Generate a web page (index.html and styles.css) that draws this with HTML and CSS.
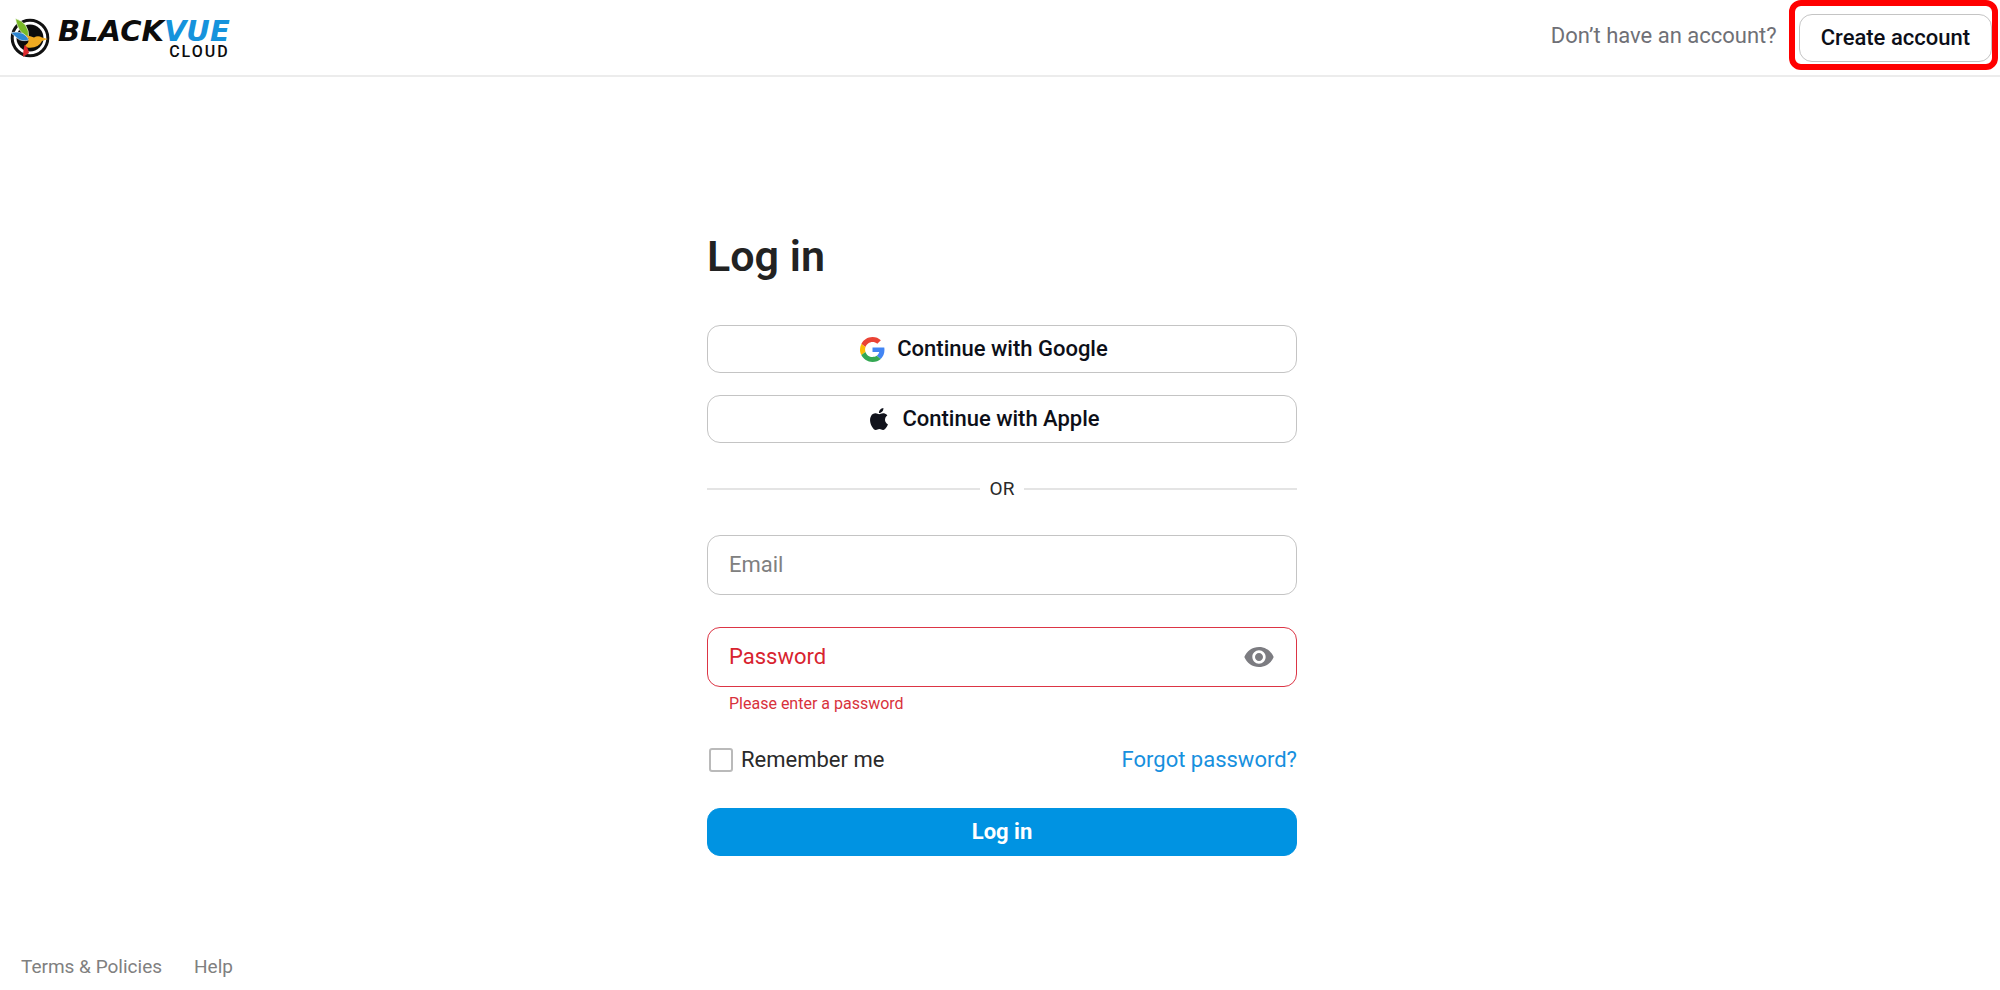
FILE: index.html
```html
<!DOCTYPE html>
<html lang="en">
<head>
<meta charset="utf-8">
<meta name="viewport" content="width=device-width, initial-scale=1">
<title>BlackVue Cloud - Log in</title>
<link rel="stylesheet" href="styles.css">
</head>
<body>
<header class="header">
  <a class="logo" href="#" aria-label="BlackVue Cloud">
    <svg class="logo-mark" viewBox="0 0 40 40" aria-hidden="true">
      <circle cx="20" cy="20" r="17.8" fill="#fff" stroke="#111" stroke-width="3"/>
      <circle cx="20" cy="20" r="13.5" fill="#0c0c0c"/>
      <path d="M5.500 .5Q12 2.500 15.500 7Q19.500 13 18.500 20Q10 14.500 8 9Q6 5 5.500 .5z" fill="#79b928" stroke="#fff" stroke-width=".6"/>
      <path d="M1 14.500Q8 13 13 15.500Q17 17.500 19 22Q11 24 7 20Q3 17 1 14.500z" fill="#2d86d2" stroke="#fff" stroke-width=".6"/>
      <path d="M18.500 20.500L15.500 17Q21 18 24 19.500Q28 17 32 19.500L38 21L32 23Q28 31 17 29.500Q14.500 28 15.500 27Q19 25 18.500 20.500z" fill="#f0aa21"/>
      <path d="M14.500 27Q18 29 19 35L13 39Q13 33 14.500 27z" fill="#dc292d"/>
    </svg>
    <span class="logo-text">
      <span class="logo-name">BLACK<span class="logo-accent">VUE</span></span>
      <span class="logo-sub">CLOUD</span>
    </span>
  </a>
  <div class="signup">
    <span class="signup-text">Don’t have an account?</span>
    <div class="highlight">
      <button class="btn btn-create" type="button">Create account</button>
    </div>
  </div>
</header>
<main class="main">
  <form class="login" novalidate>
    <h1 class="title">Log in</h1>
    <div class="providers">
      <button class="btn btn-provider" type="button">
        <svg class="icon-google" viewBox="0 0 48 48" aria-hidden="true">
          <path fill="#EA4335" d="M24 9.500c3.540 0 6.710 1.220 9.210 3.600l6.850-6.850C35.900 2.380 30.470 0 24 0 14.620 0 6.510 5.380 2.560 13.220l7.980 6.190C12.430 13.720 17.740 9.500 24 9.500z"/>
          <path fill="#4285F4" d="M46.980 24.550c0-1.570-.15-3.090-.38-4.550H24v9.020h12.940c-.58 2.960-2.260 5.480-4.780 7.180l7.730 6c4.510-4.180 7.090-10.360 7.090-17.650z"/>
          <path fill="#FBBC05" d="M10.530 28.590c-.48-1.450-.76-2.990-.76-4.590s.27-3.140.76-4.590l-7.980-6.190C.92 16.460 0 20.120 0 24s.92 7.540 2.560 10.780l7.970-6.190z"/>
          <path fill="#34A853" d="M24 48c6.480 0 11.930-2.130 15.890-5.810l-7.730-6c-2.150 1.450-4.920 2.300-8.160 2.300-6.260 0-11.570-4.220-13.470-9.910l-7.980 6.190C6.510 42.620 14.620 48 24 48z"/>
        </svg>
        Continue with Google
      </button>
      <button class="btn btn-provider" type="button">
        <svg class="icon-apple" viewBox="0 0 24 24" aria-hidden="true">
          <path fill="#11131c" d="M12.152 6.896c-.948 0-2.415-1.078-3.960-1.040-2.040.027-3.910 1.183-4.961 3.014-2.117 3.675-.546 9.103 1.519 12.090 1.013 1.454 2.208 3.090 3.792 3.039 1.520-.065 2.090-.987 3.935-.987 1.831 0 2.350.987 3.960.948 1.637-.026 2.676-1.480 3.676-2.948 1.156-1.688 1.636-3.325 1.662-3.415-.039-.013-3.182-1.221-3.220-4.857-.026-3.040 2.480-4.494 2.597-4.559-1.429-2.090-3.623-2.324-4.390-2.376-2-.156-3.675 1.090-4.610 1.090zM15.530 3.830c.843-1.012 1.400-2.427 1.245-3.830-1.207.052-2.662.805-3.532 1.818-.78.896-1.454 2.338-1.273 3.714 1.338.104 2.715-.688 3.559-1.701"/>
        </svg>
        Continue with Apple
      </button>
    </div>
    <div class="divider">OR</div>
    <div class="field">
      <input class="input" type="email" placeholder="Email" aria-label="Email">
    </div>
    <div class="field field-error">
      <input class="input" type="password" placeholder="Password" aria-label="Password" aria-invalid="true" aria-describedby="password-error">
      <button class="toggle" type="button" aria-label="Show password">
        <svg class="icon-eye" viewBox="0 0 24 24" aria-hidden="true">
          <path fill="#7c7c81" d="M12 4.500C7 4.500 2.730 7.610 1 12c1.730 4.390 6 7.500 11 7.500s9.270-3.110 11-7.500c-1.730-4.390-6-7.500-11-7.500zM12 17c-2.760 0-5-2.240-5-5s2.240-5 5-5 5 2.240 5 5-2.240 5-5 5zm0-8c-1.660 0-3 1.340-3 3s1.340 3 3 3 3-1.340 3-3-1.340-3-3-3z"/>
        </svg>
      </button>
    </div>
    <p class="error" id="password-error">Please enter a password</p>
    <div class="options">
      <label class="remember"><input class="checkbox" type="checkbox">Remember me</label>
      <a class="forgot" href="#">Forgot password?</a>
    </div>
    <button class="btn btn-primary" type="submit">Log in</button>
  </form>
</main>
<footer class="footer">
  <a class="footer-link" href="#">Terms &amp; Policies</a>
  <a class="footer-link" href="#">Help</a>
</footer>
</body>
</html>
```

FILE: styles.css
```css
* {
  box-sizing: border-box;
}

body {
  margin: 0;
  min-height: 100vh;
  display: flex;
  flex-direction: column;
  background: #fff;
  color: #2a2a2a;
  font-family: Roboto, "Liberation Sans", sans-serif;
  font-size: 22px;
  line-height: 28px;
}

a {
  text-decoration: none;
}

.header {
  display: flex;
  align-items: center;
  justify-content: space-between;
  height: 77px;
  padding: 0 8px 0 10px;
  border-bottom: 2px solid #ececec;
}

.logo {
  display: flex;
  align-items: center;
  gap: 8px;
  color: #0c0c0c;
}

.logo-mark {
  width: 40px;
  height: 40px;
}

.logo-text {
  display: flex;
  flex-direction: column;
  align-items: flex-end;
  padding-top: 4px;
}

.logo-name {
  font: italic bold 29px/24px "DejaVu Sans", sans-serif;
}

.logo-accent {
  color: #1593dc;
}

.logo-sub {
  font-size: 16px;
  font-weight: 500;
  line-height: 18px;
  letter-spacing: 2px;
}

.signup {
  display: flex;
  align-items: center;
  gap: 22px;
}

.signup-text {
  padding-bottom: 4px;
  color: #6f7076;
}

.highlight {
  position: relative;
}

.highlight::after {
  content: "";
  position: absolute;
  inset: -14px -6px -8px -10px;
  border: 6px solid #f00;
  border-radius: 12px;
  pointer-events: none;
}

.btn {
  display: flex;
  align-items: center;
  justify-content: center;
  gap: 12px;
  width: 100%;
  height: 48px;
  padding: 0 21px;
  border: 1px solid #c4c4c4;
  border-radius: 13px;
  background: #fff;
  color: #0d0f18;
  font: inherit;
  font-weight: 500;
}

.btn-provider {
  padding-right: 57px;
}

.btn-primary {
  border-color: #0093e2;
  background: #0093e2;
  color: #fff;
  font-weight: 700;
}

.main {
  display: flex;
  justify-content: center;
  padding: 150px 16px 0 20px;
}

.login {
  display: flex;
  flex-direction: column;
  width: 100%;
  max-width: 590px;
}

.title {
  margin: 0 0 40px;
  color: #222;
  font-size: 43px;
  font-weight: 600;
  line-height: 58px;
}

.providers {
  display: flex;
  flex-direction: column;
  gap: 22px;
}

.icon-google {
  width: 25px;
  height: 25px;
}

.icon-apple {
  width: 22px;
  height: 22px;
}

.divider {
  display: flex;
  align-items: center;
  gap: 10px;
  margin: 32px 0;
  font-size: 19px;
}

.divider::before,
.divider::after {
  content: "";
  flex: 1;
  height: 2px;
  background: #e4e4e4;
}

.field {
  display: flex;
  align-items: center;
  height: 60px;
  padding: 0 21px;
  border: 1px solid #c4c4c4;
  border-radius: 13px;
}

.field-error {
  margin-top: 32px;
  border-color: #dc3545;
}

.input {
  flex: 1;
  min-width: 0;
  padding: 0;
  border: 0;
  outline: 0;
  background: none;
  font: inherit;
}

.input::placeholder {
  color: #808080;
  opacity: 1;
}

.field-error .input::placeholder {
  color: #d8232f;
}

.toggle {
  display: flex;
  padding: 0;
  border: 0;
  background: none;
}

.icon-eye {
  width: 32px;
  height: 32px;
}

.error {
  margin: 6px 22px 0;
  color: #d8323c;
  font-size: 16px;
  line-height: 22px;
}

.options {
  display: flex;
  align-items: center;
  justify-content: space-between;
  margin: 31px 0 34px;
}

.remember {
  display: flex;
  align-items: center;
  gap: 8px;
}

.checkbox {
  appearance: none;
  width: 24px;
  height: 24px;
  margin: 0 0 0 2px;
  border: 2px solid #bababa;
  border-radius: 3px;
}

.forgot {
  color: #1790de;
}

.footer {
  display: flex;
  gap: 32px;
  margin-top: auto;
  padding: 0 21px 9px;
}

.footer-link {
  color: #808080;
  font-size: 19px;
}
```
